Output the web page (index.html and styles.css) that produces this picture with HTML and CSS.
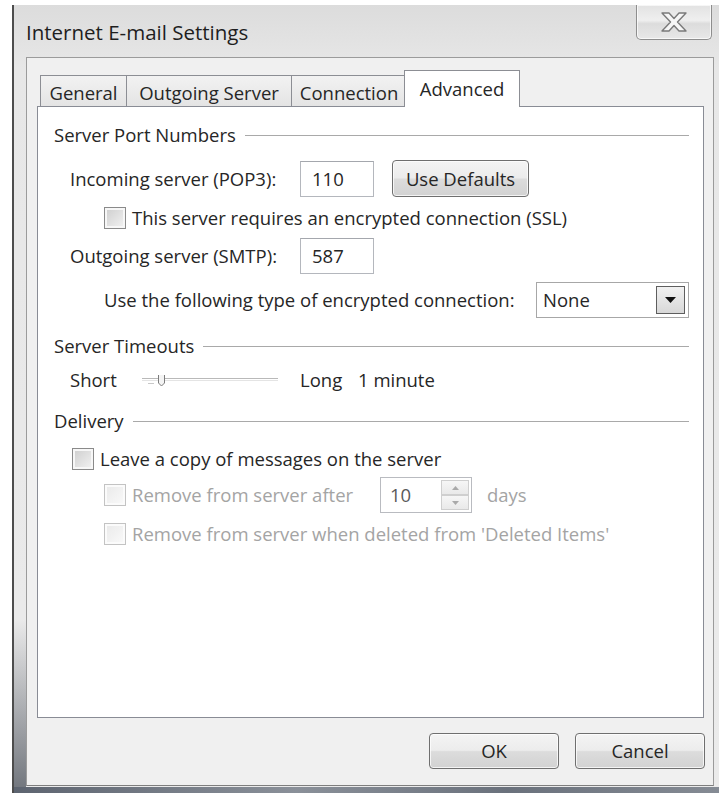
FILE: index.html
```html
<!DOCTYPE html>
<html lang="en">
<head>
<meta charset="utf-8">
<title>Internet E-mail Settings</title>
<link rel="stylesheet" href="styles.css">
</head>
<body>
<div class="window">
  <div class="titlebar">
    <span class="title">Internet E-mail Settings</span>
    <div class="caption-close">
      <svg width="26" height="20" viewBox="0 0 26 20">
        <polygon points="1,1 8,1 13,6.5 18,1 25,1 16.5,10 25,19 18,19 13,13.5 8,19 1,19 9.5,10" fill="#f6f6f6" stroke="#7a7a7a" stroke-width="1.4" stroke-linejoin="round"/>
      </svg>
    </div>
  </div>

  <div class="client">
    <div class="tabs">
      <div class="tab tab-general">General</div>
      <div class="tab tab-outgoing">Outgoing Server</div>
      <div class="tab tab-connection">Connection</div>
      <div class="tab tab-advanced active">Advanced</div>
    </div>

    <div class="panel">
      <div class="group-head group-ports"><span>Server Port Numbers</span></div>

      <div class="row row-incoming indent-1">
        <span class="port-label">Incoming server (POP3):</span>
        <span class="textbox port">110</span>
        <span class="btn btn-defaults">Use Defaults</span>
      </div>

      <div class="check row-ssl indent-2">
        <span class="box"></span>
        <span>This server requires an encrypted connection (SSL)</span>
      </div>

      <div class="row row-outgoing indent-1">
        <span class="port-label">Outgoing server (SMTP):</span>
        <span class="textbox port">587</span>
      </div>

      <div class="row row-encryption indent-2">
        <span class="enc-label">Use the following type of encrypted connection:</span>
        <span class="combo">
          <span class="combo-value">None</span>
          <span class="combo-arrow">
            <svg width="11" height="7" viewBox="0 0 11 7"><polygon points="0,0 11,0 5.5,6" fill="#111"/></svg>
          </span>
        </span>
      </div>

      <div class="group-head group-timeouts"><span>Server Timeouts</span></div>

      <div class="row row-timeout indent-1">
        <span class="slider-short">Short</span>
        <span class="slider">
          <svg width="136" height="22" viewBox="0 0 136 22">
            <line x1="0" y1="9.5" x2="136" y2="9.5" stroke="#b9b9b9" stroke-width="1"/>
            <line x1="0" y1="11.5" x2="136" y2="11.5" stroke="#e4e4e4" stroke-width="1"/>
            <line x1="6" y1="14.5" x2="12" y2="14.5" stroke="#c8c8c8" stroke-width="1"/>
            <path d="M16.5,6 L16.5,14 L19.5,17 L22.5,14 L22.5,6" fill="#f4f4f4" stroke="#7c7c7c" stroke-width="1"/>
          </svg>
        </span>
        <span class="slider-long">Long</span>
        <span>1 minute</span>
      </div>

      <div class="group-head group-delivery"><span>Delivery</span></div>

      <div class="check row-leave indent-leave">
        <span class="box"></span>
        <span>Leave a copy of messages on the server</span>
      </div>

      <div class="row row-remove-after indent-2 disabled">
        <span class="check remove-after">
          <span class="box"></span>
          <span>Remove from server after</span>
        </span>
        <span class="spin">
          <span class="spin-value">10</span>
          <span class="spin-buttons">
            <span class="spin-btn">
              <svg width="7" height="4" viewBox="0 0 7 4"><polygon points="0,4 7,4 3.5,0" fill="#a9a9a9"/></svg>
            </span>
            <span class="spin-btn">
              <svg width="7" height="4" viewBox="0 0 7 4"><polygon points="0,0 7,0 3.5,4" fill="#a9a9a9"/></svg>
            </span>
          </span>
        </span>
        <span class="days">days</span>
      </div>

      <div class="check row-remove-deleted indent-2 disabled">
        <span class="box"></span>
        <span>Remove from server when deleted from 'Deleted Items'</span>
      </div>
    </div>

    <div class="actions">
      <span class="btn btn-dialog">OK</span>
      <span class="btn btn-dialog">Cancel</span>
    </div>
  </div>
  <div class="frame-bottom"></div>
</div>
</body>
</html>
```

FILE: styles.css
```css
* {
  box-sizing: border-box;
}

body {
  margin: 0;
  background: #ffffff;
  font-family: "Open Sans", "Noto Sans", sans-serif;
  font-size: 18.5px;
  color: #262626;
  overflow: hidden;
}

/* ---- window frame ---- */
.window {
  margin: 5px 0 0 12px;
  width: 707px;
  height: 788px;
  border-left: 2px solid #4d4d4d;
  display: flex;
  flex-direction: column;
  background:
    linear-gradient(to bottom, rgba(255, 255, 255, 0) 78%, rgba(70, 76, 86, 0.75) 100%) left top / 12px 100% no-repeat,
    linear-gradient(to bottom, #dcdcdc 0, #e7e7e7 8%, #ebebeb 100%);
}

.titlebar {
  height: 52px;
  display: flex;
  align-items: flex-start;
  flex: none;
}

.title {
  margin: 14px 0 0 12px;
  font-size: 20.5px;
  line-height: 26px;
  color: #1e1e1e;
}

.caption-close {
  margin-left: auto;
  margin-right: 7px;
  width: 76px;
  height: 35px;
  border: 1px solid #8e8e8e;
  border-top: none;
  border-radius: 0 0 5px 5px;
  background: linear-gradient(to bottom, #e2e2e2 0, #efefef 45%, #dcdcdc 55%, #e8e8e8 100%);
  box-shadow: inset 0 0 0 1px rgba(255, 255, 255, 0.7);
  display: flex;
  align-items: center;
  justify-content: center;
}

/* ---- client area ---- */
.client {
  margin: 0 5px 0 12px;
  flex: 1;
  border: 1px solid #9b9b9b;
  border-bottom-color: #7e7e7e;
  background: #f0f0f0;
  display: flex;
  flex-direction: column;
}

.frame-bottom {
  height: 6px;
  flex: none;
  margin-top: 1px;
  background: linear-gradient(to right, #5d6470, #8a9099 40%, #6a717c 70%, #858b94);
}

/* ---- tabs ---- */
.tabs {
  margin: 12px 0 0 13px;
  height: 36px;
  display: flex;
  align-items: flex-end;
  position: relative;
  z-index: 1;
}

.tab {
  height: 31px;
  padding: 6px 0 0;
  display: flex;
  align-items: flex-start;
  justify-content: center;
  border: 1px solid #8c8e94;
  border-bottom: none;
  border-right: none;
  background: linear-gradient(to bottom, #f2f2f2, #e4e4e4);
  line-height: 22px;
  white-space: nowrap;
}

.tab-general { width: 86px; }
.tab-outgoing { width: 165px; }
.tab-connection { width: 116px; border-right: 1px solid #8c8e94; }

.tab.active {
  width: 116px;
  height: 37px;
  margin-left: -3px;
  margin-bottom: -1px;
  border-right: 1px solid #8c8e94;
  background: #ffffff;
  padding-top: 7px;
}

/* ---- page panel ---- */
.panel {
  margin: 0 9px 0 10px;
  height: 612px;
  flex: none;
  border: 1px solid #898c95;
  background: #ffffff;
  padding: 16px 14px 0 16px;
  display: flex;
  flex-direction: column;
}

.group-head {
  height: 24px;
  display: flex;
  align-items: center;
  line-height: 24px;
  white-space: nowrap;
}

.group-head::after {
  content: "";
  flex: 1;
  height: 1px;
  margin-left: 9px;
  background: #a9a9a9;
}

.group-timeouts { margin-top: 16px; }
.group-delivery { margin-top: 17px; }

.row {
  display: flex;
  align-items: center;
  line-height: 24px;
  white-space: nowrap;
}

.indent-1 { padding-left: 16px; }
.indent-2 { padding-left: 50px; }
.indent-leave { padding-left: 18px; }

.row-incoming { margin-top: 13px; height: 37px; }
.row-ssl { margin-top: 10px; }
.row-outgoing { margin-top: 9px; height: 36px; }
.row-encryption { margin-top: 8px; height: 36px; }
.row-timeout { margin-top: 10px; height: 24px; }
.row-leave { margin-top: 15px; }
.row-remove-after { margin-top: 7px; height: 36px; }
.row-remove-deleted { margin-top: 10px; }

.port-label {
  flex: 0 0 230px;
}

.enc-label {
  flex: 0 0 432px;
}

/* ---- controls ---- */
.textbox {
  height: 36px;
  border: 1px solid #b4b7bd;
  border-top-color: #a4a7ad;
  background: #ffffff;
  display: flex;
  align-items: center;
  padding-left: 11px;
}

.port {
  width: 74px;
}

.btn {
  display: flex;
  align-items: center;
  justify-content: center;
  border: 1px solid #6f6f6f;
  border-radius: 4px;
  background: linear-gradient(to bottom, #f4f4f4 0, #ececec 48%, #dcdcdc 52%, #d2d2d2 100%);
  box-shadow: inset 0 0 0 1px rgba(255, 255, 255, 0.75);
  line-height: 24px;
}

.btn-defaults {
  margin-left: 18px;
  width: 137px;
  height: 37px;
}

.check {
  display: flex;
  align-items: center;
  height: 22px;
  line-height: 24px;
  white-space: nowrap;
}

.box {
  flex: none;
  width: 22px;
  height: 22px;
  margin-right: 6px;
  border: 1px solid #8a8a8a;
  background: linear-gradient(135deg, #cdcdcd, #f3f3f3);
  box-shadow: inset 0 0 0 2px #f7f7f7;
}

.disabled {
  color: #a4a4a4;
}

.disabled .box {
  border-color: #c3c3c3;
  background: linear-gradient(135deg, #e9e9e9, #fafafa);
  box-shadow: inset 0 0 0 2px #fbfbfb;
}

.combo {
  width: 155px;
  height: 36px;
  border: 1px solid #a7a7a7;
  background: #ffffff;
  display: flex;
  align-items: center;
  padding: 0 3px 0 6px;
}

.combo-value {
  flex: 1;
}

.combo-arrow {
  width: 29px;
  height: 28px;
  border: 1px solid #5e5e5e;
  background: linear-gradient(to bottom, #f1f1f1, #d8d8d8);
  display: flex;
  align-items: center;
  justify-content: center;
}

.slider-short {
  flex: 0 0 72px;
}

.slider {
  flex: 0 0 136px;
  margin-right: 22px;
  display: flex;
  align-items: center;
  height: 22px;
}

.slider-long {
  flex: 0 0 58px;
}

.remove-after {
  flex: 0 0 276px;
}

.spin {
  width: 92px;
  height: 36px;
  border: 1px solid #b9bbc0;
  background: #ffffff;
  display: flex;
  align-items: stretch;
  padding: 2px 2px 2px 0;
}

.spin-value {
  flex: 1;
  display: flex;
  align-items: center;
  padding-left: 9px;
  color: #5a5a5a;
}

.spin-buttons {
  width: 28px;
  display: flex;
  flex-direction: column;
}

.spin-btn {
  flex: 1;
  border: 1px solid #cfcfcf;
  background: linear-gradient(to bottom, #f6f6f6, #e9e9e9);
  display: flex;
  align-items: center;
  justify-content: center;
}

.days {
  margin-left: 15px;
}

/* ---- dialog buttons ---- */
.actions {
  margin: 15px 8px 0 0;
  display: flex;
  justify-content: flex-end;
  gap: 16px;
}

.btn-dialog {
  width: 130px;
  height: 36px;
}
```
